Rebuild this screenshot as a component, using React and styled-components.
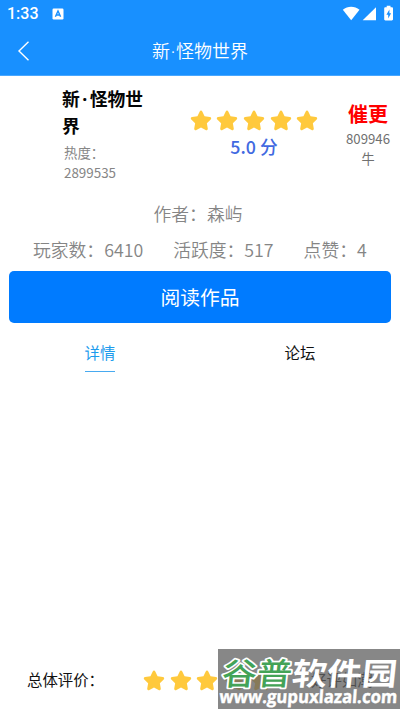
import React from "react";
import styled, { createGlobalStyle } from "styled-components";

const Global = createGlobalStyle`
  * { box-sizing: border-box; }
  body { margin: 0; background: #fff; overflow: hidden; }
`;

const Screen = styled.main`
  position: relative;
  display: flex;
  flex-direction: column;
  width: 400px;
  height: 712px;
  overflow: hidden;
  background: #fff;
  color: #111;
  font-family: "Noto Sans CJK SC", sans-serif;
`;

const TopBar = styled.header`
  height: 76px;
  flex: none;
  background: #1890ff;
  border-bottom: 1px solid #48a7ff;
  color: #fff;
`;

const StatusBar = styled.div`
  display: flex;
  align-items: center;
  height: 28px;
  padding: 0 7px;
  font: 500 16px/28px Roboto, sans-serif;
`;

const Clock = styled.span`
  width: 45px;
`;

const StatusIcons = styled.svg`
  margin-left: auto;
  margin-right: -1px;
`;

const NavBar = styled.div`
  display: grid;
  grid-template-columns: 50px 1fr 50px;
  align-items: center;
  height: 45px;
`;

const Back = styled.svg`
  margin-left: 17px;
`;

const NavTitle = styled.h1`
  margin: -2px 0 0;
  text-align: center;
  font-size: 18px;
  font-weight: 350;
  line-height: 26px;
`;

const Dot = styled.span`
  display: inline-block;
  width: ${(p) => p.$width}px;
  text-align: center;
  font-family: "Noto Sans", sans-serif;
  line-height: 1;
`;

const Summary = styled.section`
  display: grid;
  grid-template-columns: 90px minmax(0, 1fr) 64px;
  height: 124px;
  padding: 9px 0 0 62px;
`;

const BookTitle = styled.h2`
  margin: 0;
  font-size: 17.8px;
  font-weight: 700;
  line-height: 27px;
  color: #050505;
`;

const Heat = styled.p`
  margin: 3px 0 0 2px;
  font-size: 13.4px;
  line-height: 20px;
  color: #868686;
`;

const Rating = styled.div`
  display: flex;
  flex-direction: column;
  align-items: center;
  width: 204px;
  padding-top: 24px;
`;

const StarRow = styled.div`
  display: flex;
  gap: 4.7px;
`;

const Score = styled.div`
  margin-top: 2px;
  font-size: 17.8px;
  font-weight: 500;
  line-height: 26px;
  color: #4169e1;
`;

const Urge = styled.div`
  padding-top: 14px;
  text-align: center;
`;

const UrgeTitle = styled.div`
  font-size: 20px;
  font-weight: 700;
  line-height: 30px;
  color: #f00;
`;

const UrgeCount = styled.div`
  font-size: 13.2px;
  line-height: 19.5px;
  color: #707070;
`;

const Author = styled.p`
  margin: -1px 4px 0 0;
  text-align: center;
  font-size: 17.8px;
  font-weight: 350;
  line-height: 28px;
  color: #858585;
`;

const Stats = styled.div`
  display: flex;
  gap: 30px;
  padding: 8px 0 8px 33px;
  font-size: 17.8px;
  font-weight: 350;
  line-height: 28px;
  white-space: nowrap;
  color: #858585;
`;

const ReadButton = styled.button`
  flex: none;
  height: 52px;
  margin: 0 9px;
  padding: 0 0 1px;
  border: 0;
  border-radius: 5px;
  background: #007bff;
  color: #fff;
  font: 400 19.8px/30px "Noto Sans CJK SC", sans-serif;
`;

const Tabs = styled.nav`
  display: grid;
  grid-template-columns: 1fr 1fr;
  justify-items: center;
  padding-top: 14px;
`;

const Tab = styled.span`
  height: 35px;
  font-size: 15.4px;
  line-height: 30px;
  color: ${(p) => (p.$active ? "#1c9bed" : "#111")};
  border-bottom: 1px solid ${(p) => (p.$active ? "#48aaf0" : "transparent")};
`;

const Overall = styled.footer`
  display: grid;
  grid-template-columns: 116px 168px 1fr;
  align-items: center;
  height: 64px;
  margin-top: auto;
  padding-left: 27px;
  font-size: 15.4px;
  line-height: 24px;
`;

const OverallLabel = styled.span`
  margin-top: -2px;
`;

const Verdict = styled.span`
  margin-top: -2px;
`;

const Watermark = styled.aside`
  position: absolute;
  left: 218px;
  top: 649px;
  width: 182px;
  height: 60px;
  background: rgba(97, 97, 97, 0.76);
`;

const starPath =
  "M12 1.6c.6 0 1.1.4 1.4 1l2.5 5.3 5.8.8c1.4.2 1.9 1.7.9 2.7l-4.2 4.1 1 5.8c.2 1.4-1.2 2.4-2.4 1.7L12 20.3 7 23c-1.2.7-2.6-.3-2.4-1.7l1-5.8-4.2-4.1c-1-1-.5-2.5.9-2.7l5.8-.8 2.5-5.3c.3-.6.8-1 1.4-1z";

function Stars() {
  return (
    <StarRow>
      {[0, 1, 2, 3, 4].map((i) => (
        <svg key={i} width="22" height="22" viewBox="0 0 24 24">
          <path d={starPath} fill="#ffc93d" />
        </svg>
      ))}
    </StarRow>
  );
}

export default function App() {
  return (
    <Screen>
      <Global />
      <TopBar>
        <StatusBar>
          <Clock>1:33</Clock>
          <svg width="12" height="12" viewBox="0 0 12 12">
            <rect x="0.5" y="0.5" width="11" height="11" rx="1.2" fill="#fff" />
            <path d="M3.4 8.8 6 3l2.6 5.8M4.4 7h3.2" fill="none" stroke="#1890ff" strokeWidth="1.4" />
          </svg>
          <StatusIcons width="52" height="18" viewBox="0 0 52 18" fill="#fff">
            <path d="M.8 4.8C5.5.8 12.8.8 17.5 4.8L9.2 15.3Z" />
            <path d="M34 2.2V15.3H20.7Z" />
            <path d="M44.7.8h3.8v1.5h1.3c.7 0 1.2.5 1.2 1.2v10.8c0 .7-.5 1.2-1.2 1.2h-6.4c-.7 0-1.2-.5-1.2-1.2V3.5c0-.7.5-1.2 1.2-1.2h1.3Z" />
            <path d="M47.4 4.5 44.4 9.7h1.8v3.7l2.9-5.1h-1.7Z" fill="#1890ff" />
          </StatusIcons>
        </StatusBar>
        <NavBar>
          <Back width="14" height="22" viewBox="0 0 14 22">
            <path d="M11.5 1.8 2 11l9.5 9.2" fill="none" stroke="#fff" strokeWidth="1.4" />
          </Back>
          <NavTitle>新<Dot $width={6}>·</Dot>怪物世界</NavTitle>
        </NavBar>
      </TopBar>
      <Summary>
        <div>
          <BookTitle>新<Dot $width={10}>·</Dot>怪物世界</BookTitle>
          <Heat>热度：<br />2899535</Heat>
        </div>
        <Rating>
          <Stars />
          <Score>5.0 分</Score>
        </Rating>
        <Urge>
          <UrgeTitle>催更</UrgeTitle>
          <UrgeCount>809946<br />牛</UrgeCount>
        </Urge>
      </Summary>
      <Author>作者：森屿</Author>
      <Stats>
        <span>玩家数：6410</span>
        <span>活跃度：517</span>
        <span>点赞：4</span>
      </Stats>
      <ReadButton>阅读作品</ReadButton>
      <Tabs>
        <Tab $active>详情</Tab>
        <Tab>论坛</Tab>
      </Tabs>
      <Overall>
        <OverallLabel>总体评价：</OverallLabel>
        <Stars />
        <Verdict>好评如潮</Verdict>
      </Overall>
      <Watermark>
        <svg width="182" height="60" viewBox="0 0 182 60">
          <g fontFamily="Noto Sans CJK SC, sans-serif" fontSize="31" transform="translate(0 36) skewX(-6)">
            <text x="0" y="0" fontWeight="500" fill="#43a357" stroke="#fff" strokeWidth="3.4" strokeLinejoin="round" paintOrder="stroke" transform="translate(3 0) scale(1.13 1)">谷普</text>
            <text x="0" y="0" fontWeight="700" fill="#fff" transform="translate(73 0) scale(1.13 1)">软件园</text>
          </g>
          <g transform="translate(1 54) skewX(-4)">
            <text x="0" y="0" textLength="178" lengthAdjust="spacingAndGlyphs" fill="#fff" stroke="#fff" strokeWidth="0.4" fontFamily="Open Sans, sans-serif" fontWeight="700" fontSize="18">www.gupuxlazal.com</text>
          </g>
        </svg>
      </Watermark>
    </Screen>
  );
}
